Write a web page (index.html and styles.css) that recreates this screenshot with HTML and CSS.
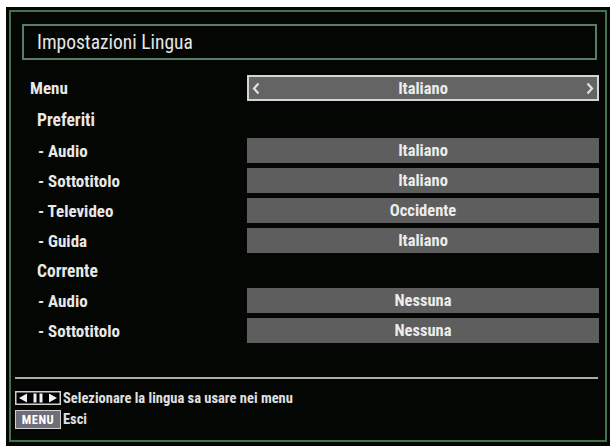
FILE: index.html
```html
<!DOCTYPE html>
<html lang="it">
<head>
<meta charset="utf-8">
<title>Impostazioni Lingua</title>
<link rel="stylesheet" href="styles.css">
</head>
<body>
<div class="screen">
  <div class="frame">
    <div class="title"><span>Impostazioni Lingua</span></div>

    <div class="settings">
      <div class="label">Menu</div>
      <div class="value selector">
        <svg class="chev" width="8" height="13" viewBox="0 0 8 13"><polyline points="6.5,1.5 2,6.5 6.5,11.5" fill="none" stroke="#e0e0e0" stroke-width="2.2"/></svg>
        <span>Italiano</span>
        <svg class="chev" width="8" height="13" viewBox="0 0 8 13"><polyline points="1.5,1.5 6,6.5 1.5,11.5" fill="none" stroke="#e0e0e0" stroke-width="2.2"/></svg>
      </div>

      <div class="label header">Preferiti</div>
      <div></div>

      <div class="label sub">- Audio</div>
      <div class="value">Italiano</div>
      <div class="label sub">- Sottotitolo</div>
      <div class="value">Italiano</div>
      <div class="label sub">- Televideo</div>
      <div class="value">Occidente</div>
      <div class="label sub">- Guida</div>
      <div class="value">Italiano</div>

      <div class="label header">Corrente</div>
      <div></div>

      <div class="label sub">- Audio</div>
      <div class="value">Nessuna</div>
      <div class="label sub">- Sottotitolo</div>
      <div class="value">Nessuna</div>
    </div>

    <div class="footer">
      <div class="divider"></div>
      <div class="hint arrows-hint">
        <svg class="key" width="46" height="14" viewBox="0 0 46 14">
          <rect x="0.75" y="0.75" width="44.5" height="12.5" fill="#000" stroke="#d0d0d0" stroke-width="1.5"/>
          <polygon points="4,7 12,2.5 12,11.5" fill="#f0f0f0"/>
          <rect x="18.5" y="2.5" width="3" height="9" fill="#f0f0f0"/>
          <rect x="24.5" y="2.5" width="3" height="9" fill="#f0f0f0"/>
          <polygon points="42,7 34,2.5 34,11.5" fill="#f0f0f0"/>
        </svg>
        <span>Selezionare la lingua sa usare nei menu</span>
      </div>
      <div class="hint menu-hint">
        <span class="key-menu">MENU</span>
        <span>Esci</span>
      </div>
    </div>
  </div>
</div>
</body>
</html>
```

FILE: styles.css
```css
html, body {
  margin: 0;
  padding: 0;
}

body {
  background: #ffffff;
  font-family: "Roboto Condensed", "Liberation Sans Narrow", "DejaVu Sans Condensed", sans-serif;
}

.screen {
  margin: 7px 0 0 6px;
  width: 604px;
  height: 439px;
  box-sizing: border-box;
  padding: 3px 3px 4px 3px;
  background: #040604;
}

.frame {
  box-sizing: border-box;
  height: 100%;
  border: 2px solid #42724f;
  display: flex;
  flex-direction: column;
}

.title {
  margin: 12px 8px 0 11px;
  height: 36px;
  box-sizing: border-box;
  border: 2px solid #587d64;
  display: flex;
  align-items: center;
  padding-left: 13px;
  color: #e6e6e6;
  font-size: 19.5px;
}

.settings {
  margin: 15px 6px 0 19px;
  display: grid;
  grid-template-columns: 1fr 352px;
  grid-template-rows: 26px 27px 25px 25px 25px 25px 25px 25px 25px;
  row-gap: 5px;
}

.label {
  color: #e8e8e8;
  font-weight: bold;
  font-size: 17px;
  display: flex;
  align-items: center;
}

.header {
  font-size: 17.5px;
  padding-left: 7px;
}

.sub {
  padding-left: 8px;
}

.value {
  background: #5e5e5e;
  color: #ececec;
  font-weight: bold;
  font-size: 16.5px;
  display: flex;
  align-items: center;
  justify-content: center;
}

.selector {
  box-sizing: border-box;
  border: 2px solid #d4d4d4;
  background: #646464;
  justify-content: space-between;
  padding: 0 3px;
}

.chev {
  display: block;
}

.footer {
  margin-top: auto;
  padding: 0 7px 11px 4px;
  display: flex;
  flex-direction: column;
}

.divider {
  height: 2px;
  background: #ababab;
  margin-bottom: 12px;
}

.hint {
  display: flex;
  align-items: center;
  gap: 2px;
  color: #e0e0e0;
  font-weight: bold;
  font-size: 14.5px;
}

.arrows-hint {
  height: 14px;
}

.menu-hint {
  margin-top: 5px;
  height: 19px;
}

.key {
  display: block;
  flex: none;
}

.key-menu {
  box-sizing: border-box;
  width: 46px;
  height: 19px;
  border: 1.5px solid #d0d0d0;
  background: #6e6e78;
  color: #ffffff;
  font-size: 12.5px;
  letter-spacing: 0.5px;
  display: flex;
  align-items: center;
  justify-content: center;
}
```
